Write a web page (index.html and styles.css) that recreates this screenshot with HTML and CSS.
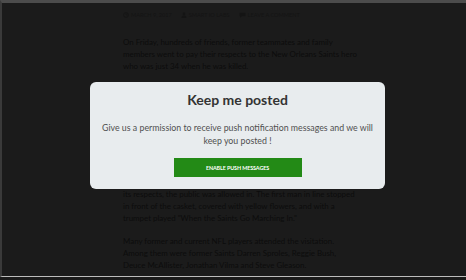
FILE: index.html
```html
<!DOCTYPE html>
<html lang="en">
  <head>
    <meta charset="UTF-8" />
    <meta name="viewport" content="width=device-width, initial-scale=1.0" />
    <title>Keep me posted</title>
    <link rel="stylesheet" href="styles.css">
  </head>
  <body>
    <div class="frame">
      <div class="article">
        <div class="meta">
          <span class="meta-item">
            <svg width="6" height="6" viewBox="0 0 10 10"><circle cx="5" cy="5" r="4" fill="none" stroke="currentColor" stroke-width="1.4"/><path d="M5 2.5V5h2" fill="none" stroke="currentColor" stroke-width="1.2"/></svg>
            March 9, 2017
          </span>
          <span class="meta-item">
            <svg width="6" height="6" viewBox="0 0 10 10"><circle cx="5" cy="3" r="2.2" fill="currentColor"/><path d="M1 10c0-3 2-4.5 4-4.5S9 7 9 10z" fill="currentColor"/></svg>
            Smart IO Labs
          </span>
          <span class="meta-item">
            <svg width="7" height="6" viewBox="0 0 12 10"><path d="M1 1h10v6H5l-3 2.5V7H1z" fill="currentColor"/></svg>
            Leave a comment
          </span>
        </div>
        <p>On Friday, hundreds of friends, former teammates and family members went to pay their respects to the New Orleans Saints hero who was just 34 when he was killed.</p>
        <p class="lead">The former star was remembered as a generous man, a devoted father and a leader in the locker room. Mourners lined up outside the funeral home long before the doors opened, many of them wearing black and gold jerseys with his number on the back. Team officials, coaches and neighbours stood quietly in the rain, sharing stories of the plays he made and the people he helped. After the family had privately paid</p>
        <p class="cont">its respects, the public was allowed in. The first man in line stopped in front of the casket, covered with yellow flowers, and with a trumpet played "When the Saints Go Marching In."</p>
        <p>Many former and current NFL players attended the visitation. Among them were former Saints Darren Sproles, Reggie Bush, Deuce McAllister, Jonathan Vilma and Steve Gleason.</p>
      </div>

      <div class="modal">
        <h2 class="modal-title">Keep me posted</h2>
        <p class="modal-text">Give us a permission to receive push notification messages and we will keep you posted !</p>
        <button class="btn-push">ENABLE PUSH MESSAGES</button>
      </div>
    </div>
  </body>
</html>
```

FILE: styles.css
```css
* {
  box-sizing: border-box;
}
html,
body {
  margin: 0;
  height: 100%;
  background: #1b1b1b;
}
body {
  font-family: Lato, "Open Sans", sans-serif;
}
.frame {
  position: relative;
  height: 277px;
  border-top: 3px solid #4c4c4c;
  border-left: 2px solid #3a3a3a;
  border-bottom: 1px solid #bdbdbd;
  background: #1b1b1b;
  overflow: hidden;
}
.article {
  width: 234px;
  margin-left: 121px;
  padding-top: 7px;
  color: #0c0c0c;
  font-size: 7.9px;
  line-height: 12px;
}
.meta {
  display: flex;
  gap: 9px;
  font-size: 5.6px;
  text-transform: uppercase;
  color: #141414;
  line-height: 10px;
}
.meta-item {
  display: flex;
  align-items: center;
  gap: 2px;
}
.article p {
  margin: 16px 0 0;
}
.article p + p {
  margin-top: 11px;
}
.article .lead {
  margin-top: 8px;
  height: 108px;
  overflow: hidden;
}
.article .cont {
  margin-top: 0;
}
.modal {
  position: absolute;
  top: 79px;
  left: 88px;
  width: 295px;
  height: 107px;
  background: #e8ecee;
  border-radius: 6px;
  padding: 9px 8px 0;
  text-align: center;
}
.modal-title {
  margin: 0;
  font-size: 14px;
  font-weight: 700;
  color: #333;
  line-height: 18px;
}
.modal-text {
  margin: 12px 0 0;
  font-size: 8.8px;
  line-height: 13px;
  color: #505050;
}
.btn-push {
  margin-top: 11px;
  width: 128px;
  height: 19px;
  border: 0;
  background: #238a16;
  color: #fff;
  font-family: Lato, sans-serif;
  font-weight: 700;
  font-size: 5.4px;
  letter-spacing: -0.1px;
}
```
